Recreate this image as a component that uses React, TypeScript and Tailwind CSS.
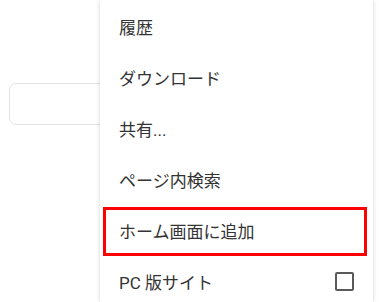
const items = ["履歴", "ダウンロード", "共有...", "ページ内検索", "ホーム画面に追加"];

export default function App() {
  return (
    <div
      className="relative w-[380px] h-[302px] overflow-hidden bg-white"
      style={{ fontFamily: '"Roboto", "Noto Sans CJK JP", sans-serif' }}
    >
      {/* page behind the menu */}
      <div className="pt-[83px] pl-[9px]">
        <div className="w-[200px] h-[42px] rounded-[7px] border border-[#e3e3e3] bg-white" />
      </div>

      {/* overflow menu */}
      <div className="absolute left-[100px] top-0 w-[273px] h-[302px] bg-white shadow-[0_0_4px_rgba(0,0,0,0.18)]">
        {items.map((label, i) => (
          <div key={i} className="relative h-[51px] flex items-center pl-[19px] pt-[6px] text-[17px] text-[#333]">
            {label}
            {i === 4 && (
              <div className="absolute left-[3px] top-[3px] w-[264px] h-[49px] border-[3px] border-[#ff0000]" />
            )}
          </div>
        ))}
        <div className="relative h-[51px] flex items-center justify-between pl-[19px] pr-[19px] pt-[6px] text-[17px] text-[#333]">
          <span>PC 版サイト</span>
          <div className="w-[19px] h-[19px] border-2 border-[#5a5a5a] rounded-[2px] -mt-[4px]" />
        </div>
      </div>
    </div>
  );
}
